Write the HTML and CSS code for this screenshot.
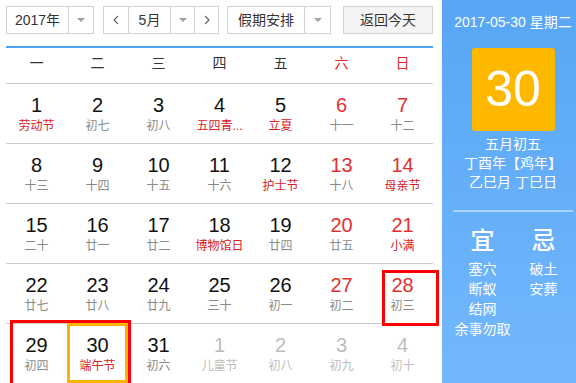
FILE: index.html
```html
<!DOCTYPE html>
<html>
<head>
<title>万年历</title>
<link rel="stylesheet" href="styles.css">
</head>
<body>

<div class="app">
  <div class="main">
    <div class="toolbar">
      <div class="select year"><span class="val">2017年</span><span class="arrow"></span></div>
      <div class="month-group">
        <span class="nav"><svg width="6" height="10" viewBox="0 0 6 10"><polyline points="5,1 1,5 5,9" fill="none" stroke="#666" stroke-width="1.2"/></svg></span>
        <span class="val">5月</span><span class="arrow"></span>
        <span class="nav next"><svg width="6" height="10" viewBox="0 0 6 10"><polyline points="1,1 5,5 1,9" fill="none" stroke="#666" stroke-width="1.2"/></svg></span>
      </div>
      <div class="select holiday"><span class="val">假期安排</span><span class="arrow"></span></div>
      <div class="today-btn">返回今天</div>
    </div>

    <div class="week">
      <span>一</span><span>二</span><span>三</span><span>四</span><span>五</span><span class="weekend">六</span><span class="weekend">日</span>
    </div>

    <div class="days">
      <div class="day"><span class="num">1</span><span class="lunar fest">劳动节</span></div>
      <div class="day"><span class="num">2</span><span class="lunar">初七</span></div>
      <div class="day"><span class="num">3</span><span class="lunar">初八</span></div>
      <div class="day"><span class="num">4</span><span class="lunar fest">五四青...</span></div>
      <div class="day"><span class="num">5</span><span class="lunar fest">立夏</span></div>
      <div class="day weekend"><span class="num">6</span><span class="lunar">十一</span></div>
      <div class="day weekend"><span class="num">7</span><span class="lunar">十二</span></div>

      <div class="day"><span class="num">8</span><span class="lunar">十三</span></div>
      <div class="day"><span class="num">9</span><span class="lunar">十四</span></div>
      <div class="day"><span class="num">10</span><span class="lunar">十五</span></div>
      <div class="day"><span class="num">11</span><span class="lunar">十六</span></div>
      <div class="day"><span class="num">12</span><span class="lunar fest">护士节</span></div>
      <div class="day weekend"><span class="num">13</span><span class="lunar">十八</span></div>
      <div class="day weekend"><span class="num">14</span><span class="lunar fest">母亲节</span></div>

      <div class="day"><span class="num">15</span><span class="lunar">二十</span></div>
      <div class="day"><span class="num">16</span><span class="lunar">廿一</span></div>
      <div class="day"><span class="num">17</span><span class="lunar">廿二</span></div>
      <div class="day"><span class="num">18</span><span class="lunar fest">博物馆日</span></div>
      <div class="day"><span class="num">19</span><span class="lunar">廿四</span></div>
      <div class="day weekend"><span class="num">20</span><span class="lunar">廿五</span></div>
      <div class="day weekend"><span class="num">21</span><span class="lunar fest">小满</span></div>

      <div class="day"><span class="num">22</span><span class="lunar">廿七</span></div>
      <div class="day"><span class="num">23</span><span class="lunar">廿八</span></div>
      <div class="day"><span class="num">24</span><span class="lunar">廿九</span></div>
      <div class="day"><span class="num">25</span><span class="lunar">三十</span></div>
      <div class="day"><span class="num">26</span><span class="lunar">初一</span></div>
      <div class="day weekend"><span class="num">27</span><span class="lunar">初二</span></div>
      <div class="day weekend"><span class="num">28</span><span class="lunar">初三</span></div>

      <div class="day"><span class="num">29</span><span class="lunar">初四</span></div>
      <div class="day today"><span class="num">30</span><span class="lunar fest">端午节</span></div>
      <div class="day"><span class="num">31</span><span class="lunar">初六</span></div>
      <div class="day other"><span class="num">1</span><span class="lunar">儿童节</span></div>
      <div class="day other"><span class="num">2</span><span class="lunar">初八</span></div>
      <div class="day other"><span class="num">3</span><span class="lunar">初九</span></div>
      <div class="day other"><span class="num">4</span><span class="lunar">初十</span></div>
    </div>

    <!-- highlight marks drawn over the grid -->
    <div class="mark mark-28"></div>
    <div class="mark mark-29"></div>
  </div>

  <div class="side">
    <div class="date">2017-05-30 星期二</div>
    <div class="big-day">30</div>
    <div class="lunar-info">
      <div>五月初五</div>
      <div>丁酉年【鸡年】</div>
      <div>乙巳月 丁巳日</div>
    </div>
    <div class="divider"></div>
    <div class="yiji">
      <div class="col">
        <div class="title">宜</div>
        <div>塞穴</div>
        <div>断蚁</div>
        <div>结网</div>
        <div>余事勿取</div>
      </div>
      <div class="col">
        <div class="title">忌</div>
        <div>破土</div>
        <div>安葬</div>
      </div>
    </div>
  </div>
</div>

</body>
</html>
```

FILE: styles.css
```css
body {
  margin: 0;
  overflow: hidden;
  background-color: white;
  font-family: "Liberation Sans", "Noto Sans CJK SC", sans-serif;
}

.app {
  display: flex;
  width: 576px;
  height: 383px;
  overflow: hidden;
}

.main {
  position: relative;
  flex: none;
  width: 427px;
  padding: 6px 9px 0 6px;
}

/* toolbar */

.toolbar {
  display: flex;
  height: 28px;
  padding-bottom: 12px;
  border-bottom: 2px solid #4ea4f5;
  font-size: 14px;
  color: #333;
}

.select,
.month-group {
  display: flex;
  box-sizing: border-box;
  height: 28px;
  border: 1px solid #d2d2d2;
  background-color: white;
}

.val {
  text-align: center;
  line-height: 26px;
}

.arrow {
  display: flex;
  align-items: center;
  justify-content: center;
  border-left: 1px solid #d2d2d2;
}

.arrow::before {
  content: "";
  border-left: 4px solid transparent;
  border-right: 4px solid transparent;
  border-top: 4px solid #a0a0a0;
}

.year .val { width: 61px; }
.year .arrow { width: 24px; }

.month-group {
  margin-left: 9px;
}

.month-group .val {
  width: 41px;
  border-left: 1px solid #d2d2d2;
}

.month-group .arrow {
  width: 23px;
}

.nav {
  display: flex;
  align-items: center;
  justify-content: center;
  width: 24px;
}

.nav.next {
  width: 23px;
  border-left: 1px solid #d2d2d2;
}

.holiday {
  margin-left: 8px;
}

.holiday .val { width: 76px; }
.holiday .arrow { width: 25px; }

.today-btn {
  box-sizing: border-box;
  width: 91px;
  height: 28px;
  margin-left: 12px;
  border: 1px solid #d2d2d2;
  background-color: #f4f4f4;
  text-align: center;
  line-height: 26px;
}

/* calendar grid */

.week {
  display: grid;
  grid-template-columns: repeat(7, 1fr);
  height: 35px;
  line-height: 31px;
  font-size: 14px;
  color: #333;
  text-align: center;
}

.week .weekend {
  color: #e02a2a;
}

.days {
  display: grid;
  grid-template-columns: repeat(7, 1fr);
}

.day {
  position: relative;
  display: flex;
  flex-direction: column;
  align-items: center;
  box-sizing: border-box;
  height: 60px;
  padding-top: 10px;
  border-top: 1px solid #cccccc;
}

.num {
  font-size: 20px;
  line-height: 23px;
  color: #111;
}

.lunar {
  white-space: nowrap;
  font-size: 12px;
  line-height: 18px;
  color: #8a8a8a;
}

.lunar.fest {
  color: #d9201f;
}

.weekend .num {
  color: #e2302f;
}

.other .num,
.other .lunar {
  color: #bdbdbd;
}

.today::after {
  content: "";
  position: absolute;
  top: -1px;
  left: 0;
  right: 0;
  bottom: 0;
  border: 3px solid #fab400;
}

.mark {
  position: absolute;
  box-sizing: border-box;
  border: 3px solid #ff0000;
}

.mark-28 {
  left: 382px;
  top: 270px;
  width: 57px;
  height: 56px;
}

.mark-29 {
  left: 10px;
  top: 320px;
  width: 121px;
  height: 70px;
}

/* right panel */

.side {
  flex: none;
  width: 142px;
  background: linear-gradient(#58a6f5, #72b8fd);
  color: white;
  text-align: center;
  font-size: 14px;
}

.date {
  padding-top: 13px;
  line-height: 18px;
}

.big-day {
  width: 83px;
  height: 83px;
  margin: 17px auto 0;
  border-radius: 3px;
  background-color: #ffb800;
  font-size: 50px;
  line-height: 83px;
}

.lunar-info {
  margin-top: 4px;
  line-height: 19px;
}

.divider {
  height: 2px;
  margin: 18px 11px 0;
  background-color: rgba(255, 255, 255, 0.45);
}

.yiji {
  display: flex;
  justify-content: center;
  margin-top: 14px;
  line-height: 20px;
}

.yiji .col {
  width: 61px;
}

.yiji .title {
  font-size: 24px;
  font-weight: 500;
  line-height: 30px;
  margin-bottom: 3px;
}
```
